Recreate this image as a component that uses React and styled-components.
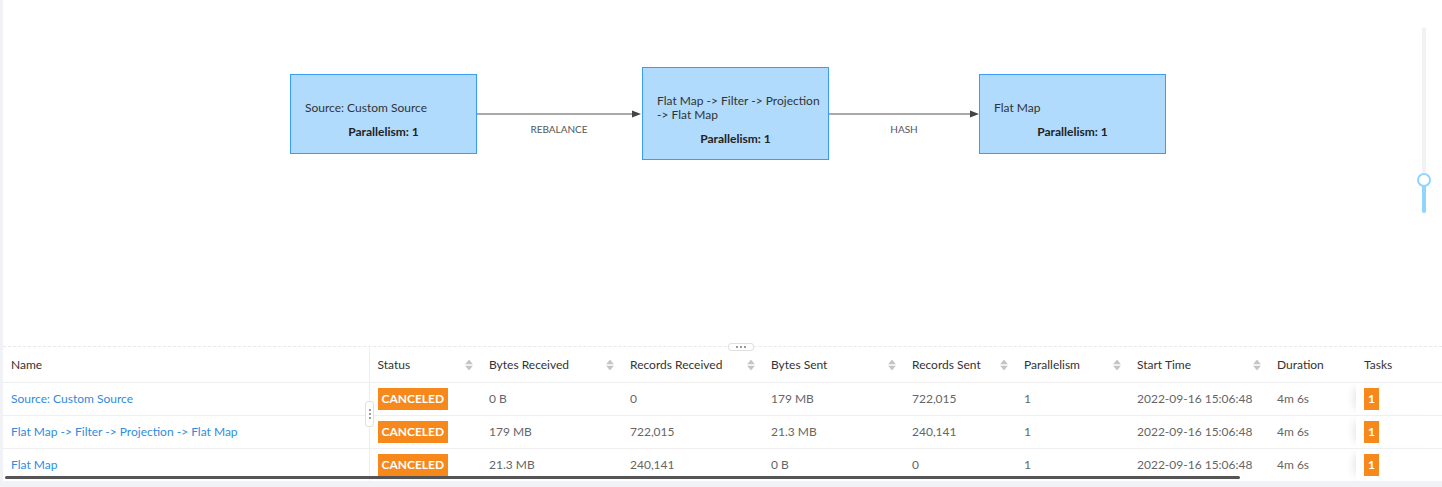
import React from "react";
import styled, { createGlobalStyle } from "styled-components";

const GlobalStyle = createGlobalStyle`
  html, body {
    margin: 0;
    padding: 0;
    background: #f0f2f5;
    font-family: Lato, "Noto Sans", sans-serif;
    -webkit-font-smoothing: antialiased;
  }
  * {
    box-sizing: border-box;
  }
`;

const Page = styled.div`
  width: 1442px;
  height: 487px;
  padding-left: 3px;
  overflow: hidden;
`;

const Panel = styled.div`
  background: #fff;
  height: 481px;
  display: flex;
  flex-direction: column;
  position: relative;
`;

const GraphArea = styled.div`
  position: relative;
  height: 346px;
  flex-shrink: 0;
`;

const Edges = styled.svg`
  position: absolute;
  left: 0;
  top: 0;
  width: 100%;
  height: 100%;
`;

const Node = styled.div`
  position: absolute;
  background: #b0dbfd;
  border: 1px solid #3a9cf5;
  padding: ${(p) => p.$pt}px 14px 0 14px;
  display: flex;
  flex-direction: column;
  color: #333;
  font-size: 12px;
  line-height: 14px;
`;

const NodeName = styled.div`
  white-space: nowrap;
`;

const NodeParallelism = styled.div`
  margin-top: 10px;
  font-weight: 700;
  text-align: center;
  color: #222;
`;

const ZoomSlider = styled.div`
  position: absolute;
  left: 1419px;
  top: 27px;
  width: 4px;
  height: 186px;
  border-radius: 2px;
  background: #f2f2f2;
`;

const SliderFill = styled.div`
  position: absolute;
  left: 0;
  bottom: 0;
  width: 4px;
  border-radius: 2px;
  background: #91d5ff;
`;

const SliderHandle = styled.div`
  position: absolute;
  left: -5px;
  width: 14px;
  height: 14px;
  border-radius: 50%;
  border: 2px solid #91d5ff;
  background: #fff;
`;

const Divider = styled.div`
  position: relative;
  border-top: 1px dashed #e8e8e8;
  height: 2px;
  flex-shrink: 0;
`;

const Grip = styled.div`
  position: absolute;
  background: #fff;
  border: 1px solid #e0e0e0;
  border-radius: 3px;
  display: flex;
  align-items: center;
  justify-content: center;
  gap: 2px;
  flex-direction: ${(p) => (p.$vertical ? "column" : "row")};
  z-index: 3;
`;

const Dot = styled.span`
  width: 2px;
  height: 2px;
  border-radius: 1px;
  background: #777;
`;

const TableWrap = styled.div`
  position: relative;
  flex: 1;
  overflow: hidden;
`;

const Table = styled.table`
  width: 1439px;
  border-collapse: collapse;
  table-layout: fixed;
  font-size: 12px;
`;

const Th = styled.th`
  height: 34px;
  padding: 0 8px;
  text-align: left;
  font-weight: 400;
  color: #333;
  border-bottom: 1px solid #efefef;
  position: relative;
  background: #fff;
  border-right: ${(p) => (p.$split ? "1px solid #efefef" : "none")};
  box-shadow: ${(p) => (p.$fixed ? "-8px 0 8px -6px rgba(0,0,0,0.1)" : "none")};
`;

const Td = styled.td`
  height: 33px;
  padding: 0 8px;
  color: #666;
  border-bottom: 1px solid #efefef;
  white-space: nowrap;
  background: #fff;
  border-right: ${(p) => (p.$split ? "1px solid #efefef" : "none")};
  box-shadow: ${(p) => (p.$fixed ? "-8px 0 8px -6px rgba(0,0,0,0.1)" : "none")};
`;

const NameLink = styled.a`
  color: #2f8be0;
  text-decoration: none;
`;

const Badge = styled.span`
  display: inline-block;
  background: #f7891c;
  color: #fff;
  font-weight: 700;
  font-size: 12px;
  line-height: 22px;
  height: 22px;
  padding: 0 4px;
  vertical-align: middle;
`;

const Sorter = styled.span`
  position: absolute;
  right: 8px;
  top: 50%;
  transform: translateY(-50%);
  display: flex;
  flex-direction: column;
  gap: 1px;
`;

const ScrollThumb = styled.div`
  position: absolute;
  left: 2px;
  width: 1235px;
  bottom: 2px;
  height: 3px;
  border-radius: 2px;
  background: #555;
`;

const SortIcon = () => (
  <Sorter>
    <svg width="8" height="5" viewBox="0 0 8 5">
      <path d="M4 0 L8 5 L0 5 Z" fill="#c4c4c4" />
    </svg>
    <svg width="8" height="5" viewBox="0 0 8 5">
      <path d="M0 0 L8 0 L4 5 Z" fill="#c4c4c4" />
    </svg>
  </Sorter>
);

const NODES = [
  { left: 287, top: 74, w: 187, h: 80, pt: 26, lines: ["Source: Custom Source"] },
  { left: 639, top: 67, w: 187, h: 93, pt: 26, lines: ["Flat Map -> Filter -> Projection", "-> Flat Map"] },
  { left: 976, top: 74, w: 187, h: 80, pt: 26, lines: ["Flat Map"] },
];

const EDGES = [
  { x1: 474, x2: 638, label: "REBALANCE" },
  { x1: 826, x2: 976, label: "HASH" },
];

const COLUMNS = [
  { title: "Name", width: 366, split: true },
  { title: "Status", width: 112, sort: true },
  { title: "Bytes Received", width: 141, sort: true },
  { title: "Records Received", width: 141, sort: true },
  { title: "Bytes Sent", width: 141, sort: true },
  { title: "Records Sent", width: 112, sort: true },
  { title: "Parallelism", width: 113, sort: true },
  { title: "Start Time", width: 140, sort: true },
  { title: "Duration", width: 87 },
  { title: "Tasks", width: 86, fixed: true },
];

const ROWS = [
  ["Source: Custom Source", "0 B", "0", "179 MB", "722,015"],
  ["Flat Map -> Filter -> Projection -> Flat Map", "179 MB", "722,015", "21.3 MB", "240,141"],
  ["Flat Map", "21.3 MB", "240,141", "0 B", "0"],
];

export default function App() {
  const handleY = 153;
  return (
    <Page>
      <GlobalStyle />
      <Panel>
        <GraphArea>
          <Edges>
            {EDGES.map((e) => (
              <g key={e.label}>
                <line x1={e.x1} y1={114} x2={e.x2 - 6} y2={114} stroke="#555" strokeWidth="1" />
                <path d={`M${e.x2} 114 L${e.x2 - 9} 110.5 L${e.x2 - 9} 117.5 Z`} fill="#444" />
                <text
                  x={(e.x1 + e.x2) / 2}
                  y={133}
                  textAnchor="middle"
                  fontSize="10"
                  fill="#555"
                  fontFamily="Lato, sans-serif"
                >
                  {e.label}
                </text>
              </g>
            ))}
          </Edges>
          {NODES.map((n) => (
            <Node
              key={n.lines[0]}
              $pt={n.pt}
              style={{ left: n.left, top: n.top, width: n.w, height: n.h }}
            >
              {n.lines.map((l) => (
                <NodeName key={l}>{l}</NodeName>
              ))}
              <NodeParallelism>Parallelism: 1</NodeParallelism>
            </Node>
          ))}
          <ZoomSlider>
            <SliderFill style={{ height: 186 - handleY }} />
            <SliderHandle style={{ top: handleY - 7 }} />
          </ZoomSlider>
        </GraphArea>
        <Divider>
          <Grip style={{ left: 725, top: -4, width: 26, height: 8 }}>
            <Dot />
            <Dot />
            <Dot />
          </Grip>
        </Divider>
        <TableWrap>
          <Table>
            <colgroup>
              {COLUMNS.map((c) => (
                <col key={c.title} style={{ width: c.width }} />
              ))}
            </colgroup>
            <thead>
              <tr>
                {COLUMNS.map((c) => (
                  <Th key={c.title} $split={c.split} $fixed={c.fixed}>
                    {c.title}
                    {c.sort && <SortIcon />}
                  </Th>
                ))}
              </tr>
            </thead>
            <tbody>
              {ROWS.map((r) => (
                <tr key={r[0]}>
                  <Td $split>
                    <NameLink href="#">{r[0]}</NameLink>
                  </Td>
                  <Td>
                    <Badge>CANCELED</Badge>
                  </Td>
                  <Td>{r[1]}</Td>
                  <Td>{r[2]}</Td>
                  <Td>{r[3]}</Td>
                  <Td>{r[4]}</Td>
                  <Td>1</Td>
                  <Td>2022-09-16 15:06:48</Td>
                  <Td>4m 6s</Td>
                  <Td $fixed>
                    <Badge>1</Badge>
                  </Td>
                </tr>
              ))}
            </tbody>
          </Table>
          <Grip $vertical style={{ left: 362, top: 53, width: 9, height: 26 }}>
            <Dot />
            <Dot />
            <Dot />
          </Grip>
          <ScrollThumb />
        </TableWrap>
      </Panel>
    </Page>
  );
}
